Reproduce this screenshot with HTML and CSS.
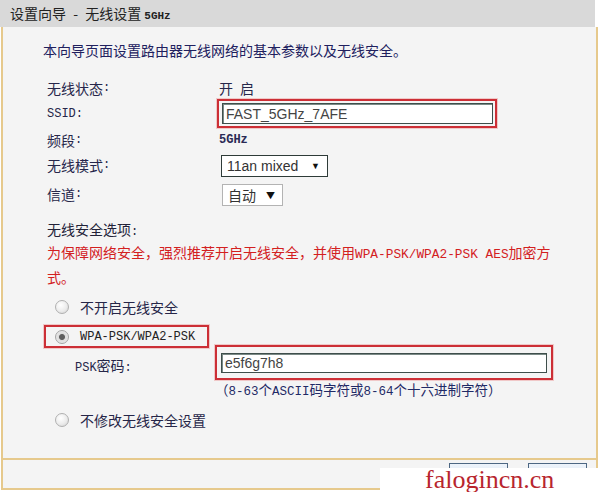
FILE: index.html
```html
<!DOCTYPE html>
<html lang="zh-CN">
<head>
<meta charset="utf-8">
<title>设置向导 - 无线设置 5GHz</title>
<link rel="stylesheet" href="styles.css">
</head>
<body>
<div class="window">
  <div class="titlebar">设置向导 <span class="dash">-</span> 无线设置 <span class="ghz">5GHz</span></div>
  <div class="panel">
    <p class="intro">本向导页面设置路由器无线网络的基本参数以及无线安全。</p>
    <div class="form">
      <div class="row r1"><span class="label">无线状态<span class="mono">:</span></span><span class="value"><span class="ch-gap">开</span>启</span></div>
      <div class="row r2"><span class="label mono">SSID:</span>
        <span class="redbox ssid-box"><input class="text-input ssid" type="text" value="FAST_5GHz_7AFE"></span></div>
      <div class="row r3"><span class="label">频段<span class="mono">:</span></span><span class="value mono small">5GHz</span></div>
      <div class="row r4"><span class="label">无线模式<span class="mono">:</span></span>
        <span class="select sel-mode focused">11an mixed<span class="arrow">▼</span></span></div>
      <div class="row r5"><span class="label">信道<span class="mono">:</span></span>
        <span class="select sel-ch">自动<span class="arrow">▼</span></span></div>
    </div>
    <div class="security">
      <div class="sec-title">无线安全选项<span class="mono">:</span></div>
      <div class="warn">为保障网络安全，强烈推荐开启无线安全，并使用<span class="mono">WPA-PSK/WPA2-PSK AES</span>加密方<br>式。</div>
      <div class="radio-row rr1"><span class="radio"></span><span class="rlabel">不开启无线安全</span></div>
      <div class="redbox wpa-box"><span class="radio checked"></span><span class="rlabel mono">WPA-PSK/WPA2-PSK</span></div>
      <div class="psk-row"><span class="psk-label"><span class="mono">PSK</span>密码<span class="mono">:</span></span>
        <span class="redbox psk-box"><input class="text-input psk" type="text" value="e5f6g7h8"></span></div>
      <div class="hint">（<span class="mono">8-63</span>个<span class="mono">ASCII</span>码字符或<span class="mono">8-64</span>个十六进制字符）</div>
      <div class="radio-row rr3"><span class="radio"></span><span class="rlabel">不修改无线安全设置</span></div>
    </div>
  </div>
  <div class="footer">
    <button class="btn">上一步</button>
    <button class="btn">下一步</button>
  </div>
  <div class="watermark">falogincn.cn</div>
</div>
</body>
</html>
```

FILE: styles.css
```css
* { box-sizing: border-box; }
html, body { margin: 0; padding: 0; background: #ffffff; }
body {
  font-family: "Noto Sans CJK SC", "Noto Sans", sans-serif;
  font-size: 14px;
  color: #26264a;
  width: 600px;
  height: 492px;
  overflow: hidden;
}
.mono { font-family: "Liberation Mono", "Noto Sans CJK SC", monospace; font-size: 12px; line-height: 1; }
.window { position: relative; width: 598px; }
.titlebar {
  width: 595px;
  height: 27px;
  background: #d9d9d9;
  padding-left: 10px;
  line-height: 27px;
  font-size: 14px;
  color: #222;
}
.titlebar .dash { margin: 0 4px; }
.titlebar .ghz { font-family: "Liberation Mono", monospace; font-size: 11px; font-weight: bold; }
.panel {
  margin-left: 1px;
  width: 597px;
  height: 431px;
  background: #f4f4f4;
  border-left: 2px solid #e6c98c;
  border-right: 2px solid #e6c98c;
  padding-top: 13px;
}
.intro {
  margin: 0 0 0 40px;
  line-height: 20px;
  color: #20205e;
}
.form {
  margin-top: 17px;
  padding-left: 44px;
  display: grid;
  grid-template-columns: 170px 1fr;
}
.row { display: contents; }
.label, .value { display: flex; align-items: center; }
.value { padding-left: 2px; }
.ch-gap { margin-right: 7px; }
.value.small { font-size: 12px; font-weight: bold; color: #2a2a55; }
.r1 .label, .r1 .value { height: 22px; }
.r2 .label { height: 30px; }
.r3 .label, .r3 .value { height: 22px; }
.r4 .label { height: 28px; }
.r5 .label { height: 29px; }
.redbox {
  border: 2px solid #cc2f36;
  box-shadow: 0 0 0 1px rgba(236, 170, 170, 0.6);
}
.ssid-box {
  display: flex;
  width: 280px;
  height: 29px;
  padding: 2px 2px 2px 3px;
  margin-bottom: 1px;
  align-self: start;
}
.text-input {
  font-family: "Liberation Sans", Arial, sans-serif;
  font-size: 14px;
  color: #444;
  background: #fff;
  border: 1px solid #3e4e4b;
  box-shadow: inset 1px 1px 0 #7b8a86;
  padding: 0 0 0 3px;
  margin: 0;
  outline: none;
}
.ssid { width: 271px; height: 21px; }
.select {
  display: inline-flex;
  align-items: center;
  height: 22px;
  background: #fff;
  border: 1px solid #b3b3b3;
  padding-left: 5px;
  font-family: "Liberation Sans", "Noto Sans CJK SC", sans-serif;
  font-size: 14px;
  color: #333;
  margin-left: 4px;
  align-self: center;
  justify-self: start;
}
.select.focused { border-color: #2e3b38; }
.select .arrow { font-size: 9px; color: #111; margin-left: auto; margin-right: 7px; }
.sel-mode { width: 107px; margin-top: 2px; }
.sel-ch { width: 61px; margin-left: 5px; margin-top: 3px; font-family: "Noto Sans CJK SC", sans-serif; }
.security { padding-left: 44px; }
.sec-title { margin-top: 10px; line-height: 22px; color: #222238; }
.warn { color: #d3201f; line-height: 25px; margin-top: 0; }
.warn .mono { font-size: 12.8px; }
.radio-row { display: flex; align-items: center; height: 22px; }
.rr1 { margin-top: 6px; }
.rr3 { margin-top: 10px; }
.radio {
  width: 14px;
  height: 14px;
  border-radius: 50%;
  border: 1px solid #b0b0b0;
  background: radial-gradient(circle at 40% 35%, #ffffff 0%, #ececec 55%, #cfcfcf 100%);
  margin-left: 8px;
  margin-right: 11px;
  flex: none;
}
.radio.checked {
  background: radial-gradient(circle, #5e5e5e 0, #5e5e5e 2.5px, #dcdcdc 3.5px, #f4f4f4 100%);
  border-color: #a4a4a4;
}
.rlabel { color: #262648; }
.wpa-box {
  display: flex;
  align-items: center;
  width: 165px;
  height: 23px;
  margin-top: 7px;
  margin-left: -3px;
  padding-left: 9px;
}
.wpa-box .radio { margin-left: 0; }
.wpa-box .rlabel { color: #222; }
.psk-row {
  display: grid;
  grid-template-columns: 168px auto;
  margin-top: -3px;
  align-items: start;
}
.psk-label { padding-left: 28px; line-height: 20px; margin-top: 10px; color: #262648; }
.psk-box {
  display: flex;
  width: 338px;
  height: 35px;
  padding: 6px 4px 5px 4px;
  justify-self: start;
}
.psk { width: 326px; height: 20px; }
.hint {
  margin-left: 168px;
  line-height: 18px;
  font-size: 13.5px;
  color: #1f2a66;
}
.hint .mono { font-size: 12.5px; }
.footer {
  margin-left: 1px;
  width: 597px;
  height: 32px;
  background: #f4f4f4;
  border: 2px solid #e6c98c;
  display: flex;
  justify-content: flex-end;
  align-items: flex-start;
  gap: 20px;
  padding: 3px 9px 0 0;
}
.btn {
  width: 59px;
  height: 24px;
  border: 1px solid #4d6783;
  background: linear-gradient(#eef4fb, #d3e0ee);
  font-family: "Noto Sans CJK SC", sans-serif;
  font-size: 13px;
  color: #1a1a40;
  padding: 0;
  letter-spacing: 3px;
}
.watermark {
  position: absolute;
  left: 380px;
  top: 468px;
  width: 220px;
  height: 24px;
  background: #ffffff;
  padding-left: 45px;
  font-family: "Liberation Serif", serif;
  font-size: 26px;
  line-height: 24px;
  color: #b8252e;
  white-space: nowrap;
}
```
